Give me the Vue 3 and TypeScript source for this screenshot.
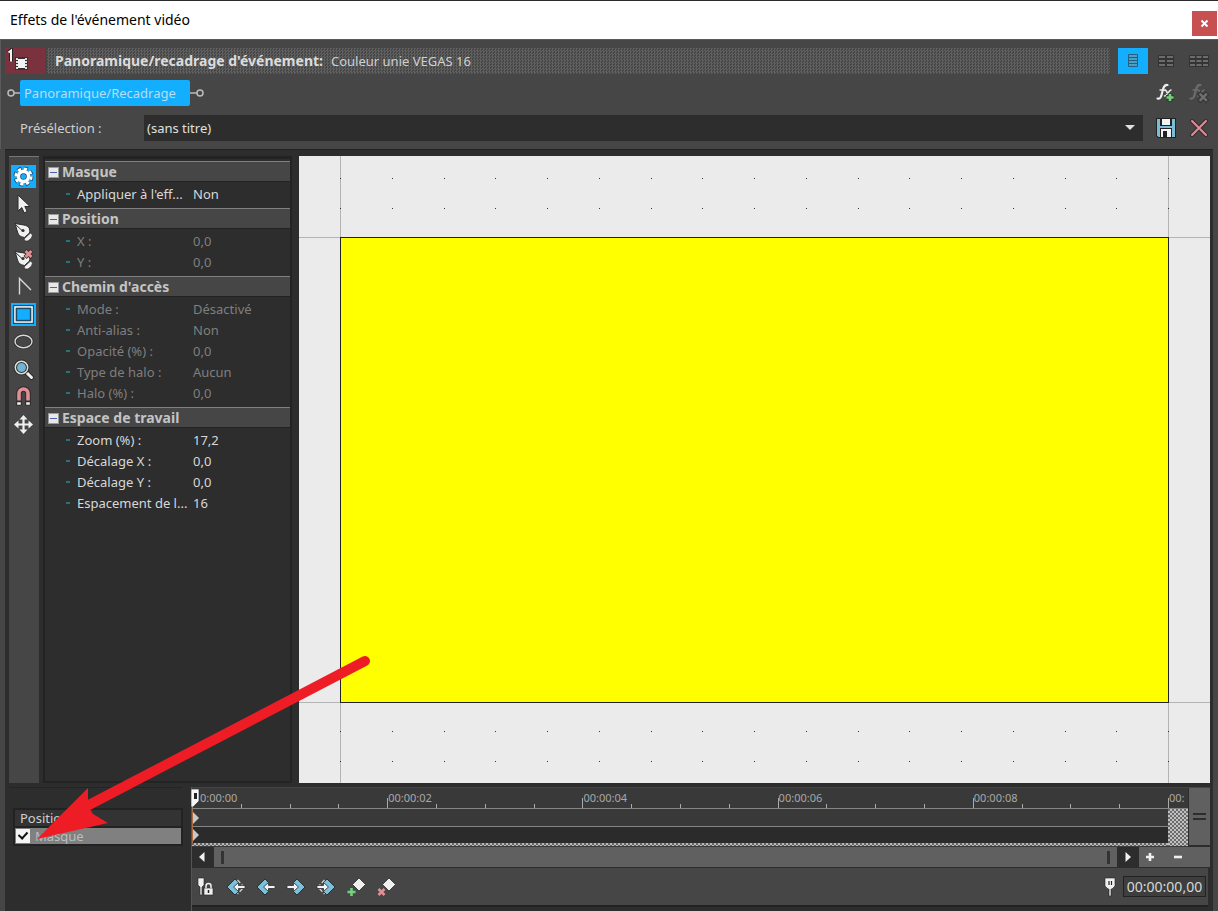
<script setup lang="ts">
import { ref } from 'vue'

interface Item { name: string; value: string }
interface Group { title: string; off: boolean; open: boolean; items: Item[] }

const groups = ref<Group[]>([
  { title: 'Masque', off: false, open: true, items: [{ name: "Appliquer à l'eff...", value: 'Non' }] },
  { title: 'Position', off: true, open: true, items: [{ name: 'X :', value: '0,0' }, { name: 'Y :', value: '0,0' }] },
  {
    title: "Chemin d'accès", off: true, open: true, items: [
      { name: 'Mode :', value: 'Désactivé' },
      { name: 'Anti-alias :', value: 'Non' },
      { name: 'Opacité (%) :', value: '0,0' },
      { name: 'Type de halo :', value: 'Aucun' },
      { name: 'Halo (%) :', value: '0,0' },
    ],
  },
  {
    title: 'Espace de travail', off: false, open: true, items: [
      { name: 'Zoom (%) :', value: '17,2' },
      { name: 'Décalage X :', value: '0,0' },
      { name: 'Décalage Y :', value: '0,0' },
      { name: 'Espacement de l...', value: '16' },
    ],
  },
])

const tools = ['gear', 'arrow', 'pen', 'pendel', 'split', 'rect', 'ellipse', 'zoom', 'magnet', 'move']
const active = ref<string[]>(['gear', 'rect'])
const maskOn = ref(true)
const preset = ref('(sans titre)')
const timecode = ref('00:00:00,00')

const dots: { x: number; y: number }[] = []
for (const y of [22, 52, 575, 605]) {
  for (let i = 0; i <= 16; i++) dots.push({ x: Math.round(41 + i * 51.75), y })
}
const marks = ['0:00:00', '00:00:02', '00:00:04', '00:00:06', '00:00:08']
const navs = ['first', 'prev', 'next', 'last', 'add', 'remove']
</script>

<template>
  <div class="win">
    <header class="titlebar">
      <h1>Effets de l'événement vidéo</h1>
      <button class="close" aria-label="Fermer">
        <svg width="9" height="9" viewBox="0 0 9 9"><path d="M1.5 1.5l6 6M7.500 1.500l-6 6" stroke="#fff" stroke-width="2" /></svg>
      </button>
    </header>

    <section class="head">
      <div class="row event">
        <div class="badge">
          <svg width="40" height="26" viewBox="0 0 40 26">
            <path d="M3.500 4.500L6 2.500V13" fill="none" stroke="#222" stroke-width="4" />
            <path d="M3.500 4.500L6 2.500V13.500" fill="none" stroke="#f2f2f2" stroke-width="2" />
            <rect x="10" y="9" width="13" height="13" fill="#333" />
            <path d="M11 10h2v2h-2zM11 13h2v2h-2zM11 16h2v2h-2zM11 19h2v2h-2zM20 10h2v2h-2zM20 13h2v2h-2zM20 16h2v2h-2zM20 19h2v2h-2z" fill="#ddd" />
            <rect x="13" y="11" width="7" height="9" fill="#f2f2f2" />
          </svg>
        </div>
        <div class="stripe"><b>Panoramique/recadrage d'événement:</b><span>Couleur unie VEGAS 16</span></div>
        <div class="views">
          <button v-for="c in 3" :key="c" :class="{ on: c === 1 }" :aria-label="'Colonnes ' + c">
            <svg width="22" height="16" viewBox="0 0 22 16">
              <template v-if="c === 1">
                <rect x="6" y="1" width="10" height="13" rx="1" fill="#24617f" />
                <path d="M7 3h8M7 6h8M7 9h8M7 12h8" stroke="#4a9fc8" stroke-width="1.800" />
              </template>
              <template v-else>
                <rect :x="c === 2 ? 3 : 1" y="2" :width="c === 2 ? 16 : 20" height="12" rx="1" fill="#333" />
                <path v-if="c === 2" d="M4 4h6M12 4h6M4 8h6M12 8h6M4 12h6M12 12h6" stroke="#6c6c6c" stroke-width="2" />
                <path v-else d="M2 4h5M8.500 4h5M15 4h5M2 8h5M8.500 8h5M15 8h5M2 12h5M8.500 12h5M15 12h5" stroke="#6c6c6c" stroke-width="2" />
              </template>
            </svg>
          </button>
        </div>
      </div>

      <div class="row chain">
        <svg width="13" height="12" viewBox="0 0 13 12"><path d="M7 6h6" stroke="#bbb" stroke-width="1.500" /><circle cx="4" cy="6" r="3" fill="none" stroke="#bbb" stroke-width="1.500" /></svg>
        <button class="plug">Panoramique/Recadrage</button>
        <svg width="15" height="12" viewBox="0 0 15 12"><path d="M0 6h7" stroke="#bbb" stroke-width="1.500" /><circle cx="10" cy="6" r="3" fill="none" stroke="#bbb" stroke-width="1.500" /></svg>
        <div class="pair">
          <button aria-label="Ajouter un effet">
            <svg width="22" height="22" viewBox="0 0 22 22">
              <g fill="none" stroke-linecap="round" stroke="#ececec">
                <path d="M2.500 16.500c3 .8 3.800-2 4.800-6.500s2-7.500 5.200-7" stroke-width="2.200" />
                <path d="M5 8h5.500" stroke-width="1.400" />
                <path d="M10 8.500c2.500-1 2 6 4.500 5M16 8c-2.200 0-4 6.500-6.500 6" stroke-width="1.500" />
              </g>
              <path d="M15 11.500v8M11 15.500h8" stroke="#263d27" stroke-width="5" />
              <path d="M15 12v7M11.500 15.500h7" stroke="#76cf7d" stroke-width="2.600" />
            </svg>
          </button>
          <button aria-label="Supprimer l'effet" disabled>
            <svg width="22" height="22" viewBox="0 0 22 22">
              <g fill="none" stroke-linecap="round" stroke="#6c6c6c">
                <path d="M2.500 16.500c3 .8 3.800-2 4.800-6.500s2-7.500 5.200-7" stroke-width="2.200" />
                <path d="M5 8h5.500" stroke-width="1.400" />
                <path d="M10 8.500c2.500-1 2 6 4.500 5M16 8c-2.200 0-4 6.500-6.500 6" stroke-width="1.500" />
              </g>
              <path d="M12.500 12.500l5.500 5.500M18 12.500L12.500 18" stroke="#383838" stroke-width="5" stroke-linecap="square" />
              <path d="M12.500 12.500l5.500 5.500M18 12.500L12.500 18" stroke="#707070" stroke-width="2.400" stroke-linecap="square" />
            </svg>
          </button>
        </div>
      </div>

      <div class="row preset">
        <label for="preset">Présélection :</label>
        <div class="combo">
          <select id="preset" v-model="preset"><option>(sans titre)</option></select>
          <i class="caret"></i>
        </div>
        <div class="pair">
          <button aria-label="Enregistrer">
            <svg width="22" height="22" viewBox="0 0 22 22">
              <path d="M1 1h20v20H3l-2-2z" fill="#222" />
              <path d="M2 2h18v18H3.500L2 18.500z" fill="#7cbcd6" />
              <rect x="5" y="1" width="12" height="8" fill="#222" /><rect x="7" y="2" width="8" height="6" fill="#f4f4f4" />
              <rect x="5" y="11" width="12" height="10" fill="#222" /><rect x="6" y="12" width="10" height="8" fill="#f4f4f4" />
              <rect x="8" y="14" width="4" height="6" fill="#222" />
            </svg>
          </button>
          <button aria-label="Supprimer">
            <svg width="22" height="22" viewBox="0 0 22 22">
              <path d="M4 4l14 14M18 4L4 18" stroke="#3a2a2c" stroke-width="4" stroke-linecap="round" />
              <path d="M4 4l14 14M18 4L4 18" stroke="#e08f96" stroke-width="2" stroke-linecap="round" />
            </svg>
          </button>
        </div>
      </div>
    </section>

    <main class="work">
      <div class="upper">
        <nav class="tools">
          <button v-for="t in tools" :key="t" :class="{ on: active.includes(t) }" :aria-label="t">
            <svg width="25" height="23" viewBox="0 0 25 23">
              <g v-if="t === 'gear'">
                <circle cx="12.500" cy="11.500" r="8" fill="none" stroke="#244a60" stroke-width="4" stroke-dasharray="4 2.280" />
                <circle cx="12.500" cy="11.500" r="7.700" fill="none" stroke="#fff" stroke-width="2.800" stroke-dasharray="3.300 2.747" />
                <circle cx="12.500" cy="11.500" r="5" fill="#244a60" stroke="#fff" stroke-width="3.400" />
                <circle cx="12.500" cy="11.500" r="2.600" fill="#14aeff" />
              </g>
              <path v-else-if="t === 'arrow'" d="M7 2v16l3.800-3.400 2.400 5.200 3-1.300-2.400-5h5.200z" fill="#f0f0f0" stroke="#2a2a2a" />
              <g v-else-if="t === 'pen' || t === 'pendel'">
                <path d="M4 3.500l9 1.500c5 1 6.500 4 5.500 8l-5 4.500c-4-.5-6-2-7-5.500z" fill="#f0f0f0" stroke="#2a2a2a" />
                <path d="M13 19l6.500-6 2 2-1 3-3.500 3h-3z" fill="#f0f0f0" stroke="#2a2a2a" stroke-width=".7" />
                <path d="M5 5l6 5.500" stroke="#333" /><circle cx="12" cy="10.500" r="1.600" fill="#333" />
                <g v-if="t === 'pendel'"><path d="M14 2.500l7 7M21 2.500l-7 7" stroke="#3a2a2c" stroke-width="4.500" /><path d="M14.500 3l6 6M20.500 3l-6 6" stroke="#e08f96" stroke-width="2.800" /></g>
              </g>
              <path v-else-if="t === 'split'" d="M8.500 19.500V3.500l11.500 11.500" fill="none" stroke="#d8d8d8" stroke-width="1.400" />
              <g v-else-if="t === 'rect'"><rect x="4" y="4" width="17" height="15" fill="none" stroke="#22495f" stroke-width="4" /><rect x="4" y="4" width="17" height="15" fill="none" stroke="#fff" stroke-width="1.600" /><rect x="5.500" y="5.500" width="14" height="12" fill="#14aeff" stroke="#22495f" stroke-width="1.400" /></g>
              <g v-else-if="t === 'ellipse'"><ellipse cx="12.500" cy="11.500" rx="8.500" ry="6.200" fill="none" stroke="#2c2c2c" stroke-width="3" /><ellipse cx="12.500" cy="11.500" rx="8.500" ry="6.200" fill="none" stroke="#d8d8d8" stroke-width="1.400" /></g>
              <g v-else-if="t === 'zoom'"><path d="M15 14l5.500 5.500" stroke="#2c2c2c" stroke-width="5" stroke-linecap="round" /><path d="M15 14l5.500 5.500" stroke="#f0f0f0" stroke-width="3" stroke-linecap="round" /><circle cx="10.500" cy="9.500" r="6.200" fill="#6fb5d6" stroke="#2c2c2c" stroke-width="3.500" /><circle cx="10.500" cy="9.500" r="6.200" fill="none" stroke="#dcdcdc" stroke-width="1.500" /></g>
              <g v-else-if="t === 'magnet'" fill="none"><path d="M8 20.500V8.500a4.500 4.500 0 0 1 9 0v12" stroke="#2c2c2c" stroke-width="5.500" /><path d="M8 15.500V8.500a4.500 4.500 0 0 1 9 0v7" stroke="#e08f96" stroke-width="3.600" /><path d="M6.200 18.500h3.600M15.200 18.500h3.600" stroke="#f0f0f0" stroke-width="2.600" /></g>
              <g v-else><path d="M12.500 4v15M5 11.500h15" stroke="#f0f0f0" stroke-width="2.200" /><path d="M12.500 2l4 4.500h-8zM12.500 21l4-4.500h-8zM3 11.500l4.500-4v8zM22 11.500l-4.500-4v8z" fill="#f0f0f0" /></g>
            </svg>
          </button>
        </nav>

        <aside class="props">
          <section v-for="g in groups" :key="g.title">
            <button class="gtitle" @click="g.open = !g.open"><i class="box"></i>{{ g.title }}</button>
            <table v-if="g.open" :class="{ off: g.off }">
              <tbody>
                <tr v-for="it in g.items" :key="it.name"><th scope="row">{{ it.name }}</th><td>{{ it.value }}</td></tr>
              </tbody>
            </table>
          </section>
        </aside>

        <div class="canvas">
          <svg viewBox="0 0 911 627" preserveAspectRatio="none" shape-rendering="crispEdges">
            <path d="M41.500 0v627M869.500 0v627M0 81.500h911M0 546.500h911" stroke="#b4b4b4" />
            <rect v-for="(d, i) in dots" :key="i" :x="d.x" :y="d.y" width="1" height="1" fill="#333" />
            <rect x="41.500" y="81.500" width="828" height="465" fill="#ffff00" stroke="#222" />
          </svg>
        </div>
      </div>

      <div class="lower">
        <div class="tracks">
          <button class="trk">Position</button>
          <div class="trk sel"><input id="mask" v-model="maskOn" type="checkbox"><label for="mask">Masque</label></div>
        </div>

        <div class="timeline">
          <div class="lanes">
            <div class="area">
              <div class="ruler">
                <div v-for="m in marks" :key="m" class="cell"><span class="num">{{ m }}</span><i v-for="k in 4" :key="k"></i></div>
                <div class="cell end"><span class="num">00:</span><i></i></div>
              </div>
              <div class="lane"><i class="key"></i></div>
              <div class="lane low"><i class="key"></i></div>
              <div class="hatch"></div>
              <div class="after"></div>
              <svg class="head-mark" width="9" height="19" viewBox="0 0 9 19"><path d="M0 0h8v12l-6 6H0z" fill="#f6f6f6" stroke="#222" stroke-width=".6" /><path d="M3 4h3v6H3z" fill="#222" /></svg>
            </div>
            <div class="grip"><i></i><i></i></div>
          </div>

          <div class="scroll">
            <button class="dark" aria-label="Défiler à gauche"><svg width="8" height="10" viewBox="0 0 8 10"><path d="M6.500 0v10L1 5z" fill="#f0f0f0" /></svg></button>
            <div class="thumb"><i></i><i></i></div>
            <button class="dark" aria-label="Défiler à droite"><svg width="8" height="10" viewBox="0 0 8 10"><path d="M1.500 0v10L7 5z" fill="#f0f0f0" /></svg></button>
            <button class="zoomer" aria-label="Zoom avant"><svg width="10" height="10" viewBox="0 0 10 10"><path d="M5 1v8M1 5h8" stroke="#f0f0f0" stroke-width="2.600" /></svg></button>
            <button class="zoomer wide" aria-label="Zoom arrière"><svg width="10" height="10" viewBox="0 0 10 10"><path d="M1 5h8" stroke="#f0f0f0" stroke-width="2.600" /></svg></button>
          </div>

          <div class="foot">
            <button aria-label="Synchroniser le curseur">
              <svg width="20" height="22" viewBox="0 0 20 22"><path d="M2 2h6v7L6 11v8H4v-8L2 9z" fill="#f0f0f0" stroke="#222" stroke-width=".6" /><rect x="8" y="12" width="9" height="7" fill="#f0f0f0" stroke="#222" stroke-width=".6" /><path d="M10 12v-2a2.500 2.500 0 0 1 5 0v2" fill="none" stroke="#f0f0f0" stroke-width="1.500" /><path d="M12.500 14v3" stroke="#222" stroke-width="1.500" /></svg>
            </button>
            <button v-for="n in navs" :key="n" :aria-label="n">
              <svg width="20" height="20" viewBox="0 0 20 20">
                <g v-if="n === 'first' || n === 'prev' || n === 'next' || n === 'last'" :transform="n === 'next' || n === 'last' ? 'matrix(-1 0 0 1 20 0)' : undefined">
                  <path d="M1 10l8-8 3.500 3.500L8 10l4.500 4.500L9 18z" fill="#7cc0dc" stroke="#26323a" />
                  <path v-if="n === 'first' || n === 'last'" d="M11.500 3l6.500 7-6.500 7" fill="none" stroke="#d0d0d0" stroke-width="1.400" stroke-dasharray="4 2" />
                  <path d="M7.500 10l5-4.500v3H19v3h-6.500v3z" fill="#f4f4f4" stroke="#26323a" stroke-width=".8" />
                </g>
                <g v-else>
                  <path d="M13 1l6.500 6.500L13 14 6.500 7.500z" fill="#f0f0f0" stroke="#2a2a2a" stroke-width=".8" />
                  <path v-if="n === 'add'" d="M5.500 11v8M1.500 15h8" stroke="#76cf7d" stroke-width="2.600" />
                  <path v-else d="M2.500 12l6 6M8.500 12l-6 6" stroke="#e08f96" stroke-width="2.600" />
                </g>
              </svg>
            </button>
            <svg class="pin" width="12" height="20" viewBox="0 0 12 20"><path d="M1 1h10v8l-3 3H7v7H5v-7H4L1 9z" fill="#f0f0f0" stroke="#222" stroke-width=".6" /><path d="M5 4v4M7.500 4v4" stroke="#222" stroke-width="1.200" /></svg>
            <input v-model="timecode" class="time" type="text" aria-label="Position du curseur">
          </div>
        </div>
      </div>
    </main>

    <svg class="pointer" width="380" height="200" viewBox="0 0 380 200" aria-hidden="true">
      <path d="M85 159L365 13" stroke="#ee1c25" stroke-width="10" stroke-linecap="round" />
      <path d="M37 191L88 140V158L93 166L108 175z" fill="#ee1c25" />
    </svg>
  </div>
</template>

<style>
html, body { margin: 0; background: #464646; }
</style>

<style scoped>
* { box-sizing: border-box; }
button, input, select { font: inherit; color: inherit; border: 0; padding: 0; margin: 0; background: none; border-radius: 0; }
svg { display: block; flex: none; }
i { display: block; }
.win { position: relative; min-height: 100vh; display: flex; flex-direction: column; background: #464646; border-top: 1px solid #2b2b2b; color: #cfcfcf; font: 13px/20px "Noto Sans", "Open Sans", sans-serif; overflow: hidden; }
.titlebar { height: 38px; background: #fff; display: flex; align-items: center; justify-content: space-between; padding: 0 1px 0 10px; }
h1 { margin: 0; font: 14px/20px "Noto Sans", sans-serif; color: #000; }
.close { width: 25px; height: 25px; margin-top: 6px; background: #c75050; display: grid; place-items: center; }
.head { border-top: 1px solid #5a5a5a; border-left: 1px solid #5a5a5a; }
.row { display: flex; align-items: center; }
.event { padding: 8px 4px 0; }
.badge { width: 40px; height: 26px; background: #7a323f; margin-right: 2px; }
.stripe { flex: 1; height: 26px; padding: 0 0 0 8px; display: flex; align-items: center; gap: 8px; white-space: nowrap; background: repeating-conic-gradient(#5f5f5f 0 25%, #464646 0 50%) 0 0 / 3px 3px; }
.stripe b { font: bold 14px/20px "Noto Sans", sans-serif; color: #dcdcdc; }
.views { display: flex; gap: 3px; margin-left: 8px; }
.views button { width: 30px; height: 26px; display: grid; place-items: center; }
.views .on { background: #14aeff; }
.chain { height: 26px; margin-top: 6px; padding: 0 4px 0 6px; }
.plug { width: 170px; height: 26px; padding-left: 4px; text-align: left; background: #14aeff; border-radius: 2px; color: #b9dcf0; }
.pair { display: flex; gap: 11px; margin-left: auto; padding-right: 4px; }
.preset { height: 26px; margin: 9px 0 8px; padding: 0 4px 0 19px; }
.preset label { width: 124px; }
.combo { flex: 1; position: relative; background: #2d2d2d; height: 26px; }
.combo select { width: 100%; height: 26px; padding-left: 3px; appearance: none; color: #e0e0e0; }
.caret { position: absolute; right: 8px; top: 10px; border: 5px solid transparent; border-top-color: #e0e0e0; border-bottom: 0; pointer-events: none; }
.preset .pair { margin-left: 12px; }
.work { flex: 1; display: flex; flex-direction: column; margin: 0 5px; padding: 6px 3px 0 4px; background: #2d2d2d; border-top: 1px solid #222; }
.upper { flex: 1; display: grid; grid-template-columns: 30px 249px 1fr; column-gap: 4px; }
.tools { background: #464646; border-top: 1px solid #777; }
.tools { display: flex; flex-direction: column; align-items: flex-start; justify-content: space-between; padding: 8px 2px 347px; }
.tools button { width: 25px; height: 23px; }
.tools .on { background: #14aeff; }
.props { background: #2d2d2d; border: 2px solid #232323; border-top-width: 3px; padding-top: 2px; }
.gtitle { width: 100%; height: 21px; display: flex; align-items: center; gap: 3px; padding: 1px 0 0 3px; background: #464646; border-top: 1px solid #808080; border-bottom: 1px solid #222; font: bold 14px/18px "Noto Sans", sans-serif; color: #c4c4c4; }
.box { width: 11px; height: 11px; background: linear-gradient(#4a62b0, #4a62b0) center / 7px 1px no-repeat, #e8e8e8; border: 1px solid #999; }
table { border-collapse: collapse; margin: 2px 0 3px; color: #d8d8d8; table-layout: fixed; width: 100%; }
table.off { color: #7f7f7f; }
tr { height: 21px; }
th, td { padding: 0; font-weight: 400; text-align: left; line-height: 21px; white-space: nowrap; }
th { width: 148px; padding-left: 21px; }
th::before { content: ""; display: inline-block; width: 4px; height: 2px; margin-right: 7px; vertical-align: 4px; background: #23757a; }
.canvas { margin-left: 3px; background: #ebebeb; position: relative; }
.canvas svg { position: absolute; inset: 0; width: 100%; height: 100%; }
.lower { display: flex; gap: 9px; padding-top: 4px; }
.tracks { width: 173px; border-top: 1px solid #242424; padding: 20px 0 0 4px; }
.trk { display: flex; align-items: center; width: 170px; height: 18px; padding-left: 5px; line-height: 16px; background: #333; border: 2px solid #222; border-bottom: 0; }
.trk.sel { height: 20px; padding-left: 1px; background: #808080; border-bottom: 2px solid #222; gap: 5px; color: #bdbdbd; }
.trk input { appearance: none; width: 14px; height: 14px; background: #f4f4f4; display: grid; place-items: center; }
.trk input:checked::after { content: ""; width: 4px; height: 7px; margin-bottom: 3px; border: solid #111; border-width: 0 2px 2px 0; transform: rotate(42deg); }
.timeline { flex: 1; min-width: 0; border-left: 1px solid #555; padding-bottom: 4px; }
.lanes { display: flex; height: 60px; gap: 1px; border-top: 1px solid #444; }
.area { flex: 1; min-width: 0; position: relative; background: #393939; }
.ruler { display: flex; height: 21px; border-bottom: 1px solid #858585; overflow: hidden; }
.cell { flex: 1; display: flex; align-items: flex-end; position: relative; }
.cell i { flex: 1; height: 4px; border-left: 1px solid #aaa; }
.cell i:nth-of-type(1) { height: 10px; }
.cell.end { flex: 0 0 20px; }
.num { position: absolute; left: 1px; top: 1px; font-size: 11px; line-height: 18px; color: #a8a8a8; }
.cell:first-child .num { left: 8px; }
.lane { height: 18px; border-bottom: 1px solid #858585; border-left: 1px solid #b06a3c; display: flex; align-items: center; }
.lane.low { height: 16px; background: #2b2b2b; border-bottom: 0; }
.key { border: 6px solid transparent; border-left-color: #c8c8c8; border-right: 0; }
.hatch { height: 3px; background: repeating-conic-gradient(#b8b8b8 0 25%, #666 0 50%) 0 0 / 4px 4px; }
.after { position: absolute; right: 0; top: 21px; bottom: 1px; width: 20px; background: repeating-conic-gradient(#c0c0c0 0 25%, #6c6c6c 0 50%) 0 0 / 4px 4px; }
.head-mark { position: absolute; left: -1px; top: 1px; }
.grip { width: 21px; height: 57px; background: #606060; display: flex; flex-direction: column; gap: 3px; align-items: center; justify-content: center; }
.grip i { width: 13px; height: 2px; background: #2d2d2d; }
.scroll { display: flex; height: 21px; border-bottom: 1px solid #2d2d2d; background: #606060; }
.scroll button { display: grid; place-items: center; }
.dark { width: 22px; background: #2d2d2d; }
.scroll .dark:first-child { padding-right: 3px; }
.thumb { flex: 1; display: flex; justify-content: space-between; align-items: center; padding: 0 7px; }
.thumb i { width: 3px; height: 13px; background: #333; }
.zoomer { width: 21px; }
.scroll .zoomer.wide { width: 50px; padding-right: 14px; }
.foot { display: flex; align-items: center; height: 39px; margin: 0 2px 0 0; padding: 0 2px 0 4px; gap: 10px; background: #464646; border-bottom: 2px solid #222; }
.pin { margin-left: auto; }
.time { width: 83px; height: 21px; margin-left: -3px; border: 1px solid #222; background: #3e3e3e; text-align: center; font-size: 14px; color: #d8d8d8; }
.pointer { position: absolute; left: 0; top: 647px; pointer-events: none; }
</style>
